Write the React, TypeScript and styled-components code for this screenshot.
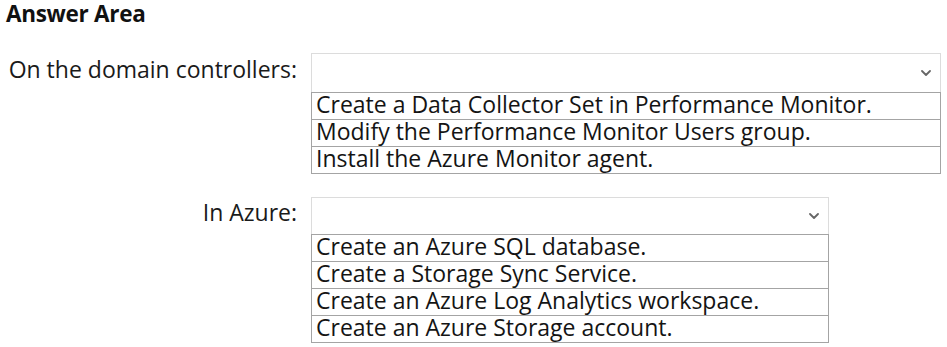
import React from "react";
import styled, { createGlobalStyle } from "styled-components";

const Global = createGlobalStyle`
  html, body { margin: 0; padding: 0; background: #ffffff; }
  body { font-family: "Open Sans", "Noto Sans", "DejaVu Sans", sans-serif; color: #141414; }
`;

const Page = styled.div`
  width: 947px;
  height: 347px;
  box-sizing: border-box;
  padding: 0 0 0 6px;
  display: flex;
  flex-direction: column;
`;

const Heading = styled.h1`
  margin: 0;
  height: 28px;
  font-size: 22.5px;
  font-weight: 700;
  line-height: 28px;
  color: #111;
  letter-spacing: -0.3px;
`;

const Group = styled.div<{ $top: number }>`
  display: grid;
  grid-template-columns: 291px 1fr;
  column-gap: 14px;
  margin-top: ${(p) => p.$top}px;
  align-items: start;
`;

const Label = styled.div<{ $pad: number }>`
  padding-top: ${(p) => p.$pad}px;
  text-align: right;
  font-size: 23px;
  line-height: 26px;
  color: #1a1a1a;
  white-space: nowrap;
`;

const Field = styled.div<{ $width: number }>`
  width: ${(p) => p.$width}px;
  display: flex;
  flex-direction: column;
`;

const Select = styled.div<{ $height: number }>`
  height: ${(p) => p.$height}px;
  box-sizing: border-box;
  border: 1px solid #dcdcdc;
  border-bottom: none;
  display: flex;
  align-items: center;
  justify-content: flex-end;
  padding-right: 9px;
`;

const Options = styled.div`
  border: 1px solid #a4a4a4;
  display: flex;
  flex-direction: column;
`;

const Option = styled.div`
  height: 26px;
  box-sizing: border-box;
  padding-left: 4px;
  font-size: 23px;
  line-height: 23px;
  color: #141414;
  white-space: nowrap;
  & + & { border-top: 1px solid #a4a4a4; height: 27px; }
`;

const Chevron = () => (
  <svg width="10" height="6" viewBox="0 0 10 6" fill="none">
    <path d="M1 1 L5 5 L9 1" stroke="#666" strokeWidth="1.8" strokeLinecap="round" strokeLinejoin="round" />
  </svg>
);

type Q = { label: string; width: number; top: number; header: number; pad: number; options: string[] };

const questions: Q[] = [
  {
    label: "On the domain controllers:",
    width: 630,
    top: 25,
    header: 39,
    pad: 3,
    options: [
      "Create a Data Collector Set in Performance Monitor.",
      "Modify the Performance Monitor Users group.",
      "Install the Azure Monitor agent.",
    ],
  },
  {
    label: "In Azure:",
    width: 518,
    top: 23,
    header: 37,
    pad: 2,
    options: [
      "Create an Azure SQL database.",
      "Create a Storage Sync Service.",
      "Create an Azure Log Analytics workspace.",
      "Create an Azure Storage account.",
    ],
  },
];

export default function App() {
  return (
    <>
      <Global />
      <Page>
        <Heading>Answer Area</Heading>
        {questions.map((q) => (
          <Group key={q.label} $top={q.top}>
            <Label $pad={q.pad}>{q.label}</Label>
            <Field $width={q.width}>
              <Select $height={q.header}>
                <Chevron />
              </Select>
              <Options>
                {q.options.map((o) => (
                  <Option key={o}>{o}</Option>
                ))}
              </Options>
            </Field>
          </Group>
        ))}
      </Page>
    </>
  );
}
